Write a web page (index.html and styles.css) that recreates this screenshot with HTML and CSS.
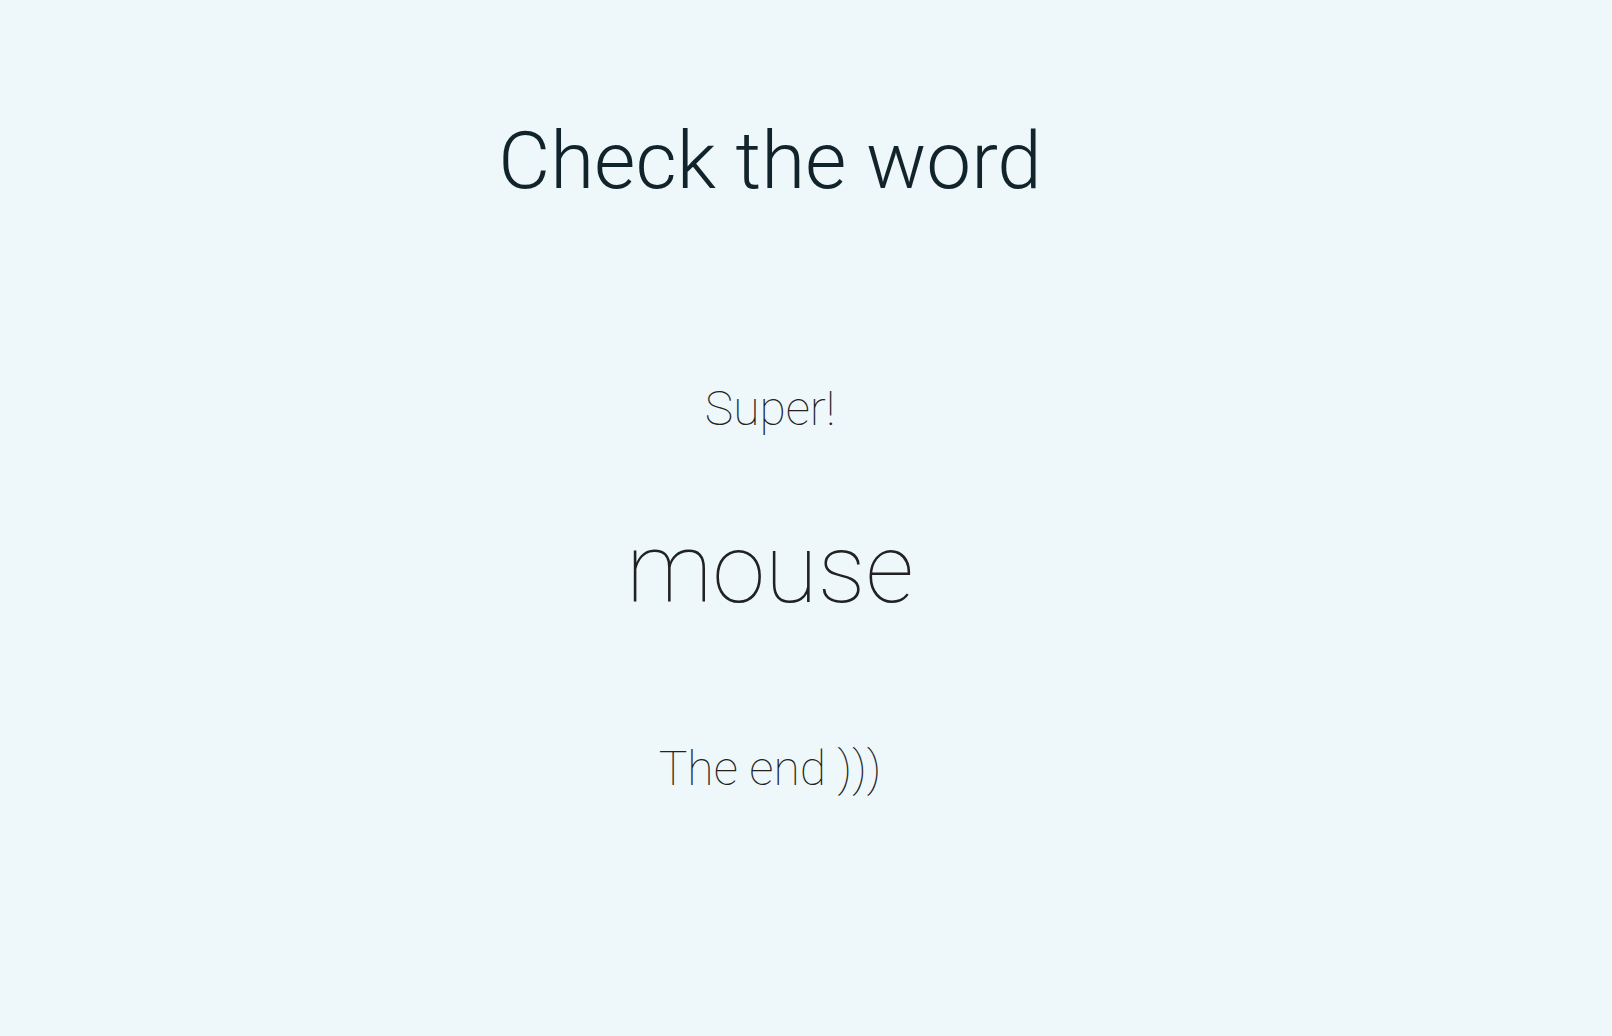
FILE: index.html
```html
<!DOCTYPE html>
<html lang="en">
<head>
<meta charset="utf-8">
<title>Check the word</title>
<link rel="stylesheet" href="styles.css">
</head>
<body>
<main class="page">
  <h1 class="title">Check the word</h1>
  <p class="result">Super!</p>
  <p class="word">mouse</p>
  <p class="end">The end )))</p>
</main>
</body>
</html>
```
FILE: styles.css
```css
html, body {
  margin: 0;
  padding: 0;
  background: #eef7fa;
  height: 100%;
}
.page {
  width: 1540px;
  display: flex;
  flex-direction: column;
  align-items: center;
  padding-top: 121px;
  font-family: Roboto, "Liberation Sans", sans-serif;
}
.title {
  margin: 0;
  font-size: 80px;
  line-height: 1;
  font-weight: 300;
  color: #12242b;
}
.result {
  margin: 184px 0 0;
  font-size: 48px;
  line-height: 1;
  font-weight: 100;
  color: #222;
}
.word {
  margin: 88px 0 0;
  font-size: 96px;
  line-height: 1;
  font-weight: 100;
  color: #222;
}
.end {
  margin: 128px 0 0;
  font-size: 48px;
  line-height: 1;
  font-weight: 100;
  color: #222;
}
```
